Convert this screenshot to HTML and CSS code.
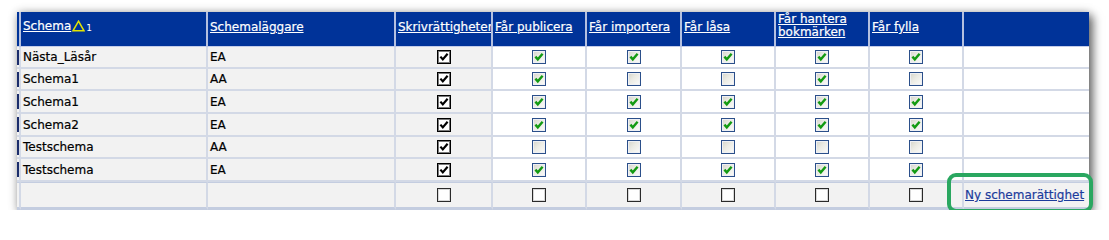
FILE: index.html
```html
<!DOCTYPE html>
<html lang="sv">
<head>
<meta charset="utf-8">
<title>Schemarättigheter</title>
<link rel="stylesheet" href="styles.css">
</head>
<body>
<div class="page">
  <div class="panel">
    <table class="grid">
      <colgroup>
        <col class="c-ind"><col class="c-name"><col class="c-owner"><col class="c-write">
        <col class="c-perm"><col class="c-perm2"><col class="c-perm"><col class="c-perm"><col class="c-perm"><col class="c-last">
      </colgroup>
      <thead>
        <tr class="head">
          <th class="ind"></th>
          <th><a class="hl" href="#">Schema</a><span class="sort"><svg class="tri" width="13" height="12" viewBox="0 0 13 12"><polygon points="6.5,1.2 12,10.8 1,10.8" fill="none" stroke="#e4e400" stroke-width="1.5"/></svg><span class="sortnum">1</span></span></th>
          <th><a class="hl" href="#">Schemaläggare</a></th>
          <th><a class="hl" href="#">Skrivrättigheter</a></th>
          <th><a class="hl" href="#">Får publicera</a></th>
          <th><a class="hl" href="#">Får importera</a></th>
          <th><a class="hl" href="#">Får låsa</a></th>
          <th class="two"><a class="hl" href="#">Får hantera bokmärken</a></th>
          <th><a class="hl" href="#">Får fylla</a></th>
          <th class="lastcol"></th>
        </tr>
      </thead>
      <tbody>
        <tr class="row r22">
          <td class="ind"><span class="mark"></span></td><td class="txt">Nästa_Läsår</td><td class="txt">EA</td>
          <td class="cbc grey"><span class="cb blk"><svg class="ck" viewBox="0 0 12 12"><path d="M2.4 5.6 L4.8 8.4 L9.6 2.8" fill="none" stroke="#000" stroke-width="2.2"/></svg></span></td>
          <td class="cbc"><span class="cb on"><svg class="ck" viewBox="0 0 12 12"><path d="M2.4 5.6 L4.8 8.4 L9.6 2.8" fill="none" stroke="#129a12" stroke-width="2.4"/></svg></span></td>
          <td class="cbc"><span class="cb on"><svg class="ck" viewBox="0 0 12 12"><path d="M2.4 5.6 L4.8 8.4 L9.6 2.8" fill="none" stroke="#129a12" stroke-width="2.4"/></svg></span></td>
          <td class="cbc"><span class="cb on"><svg class="ck" viewBox="0 0 12 12"><path d="M2.4 5.6 L4.8 8.4 L9.6 2.8" fill="none" stroke="#129a12" stroke-width="2.4"/></svg></span></td>
          <td class="cbc"><span class="cb on"><svg class="ck" viewBox="0 0 12 12"><path d="M2.4 5.6 L4.8 8.4 L9.6 2.8" fill="none" stroke="#129a12" stroke-width="2.4"/></svg></span></td>
          <td class="cbc"><span class="cb on"><svg class="ck" viewBox="0 0 12 12"><path d="M2.4 5.6 L4.8 8.4 L9.6 2.8" fill="none" stroke="#129a12" stroke-width="2.4"/></svg></span></td>
          <td class="lastcol"></td>
        </tr>
        <tr class="row r22">
          <td class="ind"><span class="mark"></span></td><td class="txt">Schema1</td><td class="txt">AA</td>
          <td class="cbc grey"><span class="cb blk"><svg class="ck" viewBox="0 0 12 12"><path d="M2.4 5.6 L4.8 8.4 L9.6 2.8" fill="none" stroke="#000" stroke-width="2.2"/></svg></span></td>
          <td class="cbc"><span class="cb on"><svg class="ck" viewBox="0 0 12 12"><path d="M2.4 5.6 L4.8 8.4 L9.6 2.8" fill="none" stroke="#129a12" stroke-width="2.4"/></svg></span></td>
          <td class="cbc"><span class="cb off"></span></td>
          <td class="cbc"><span class="cb off"></span></td>
          <td class="cbc"><span class="cb on"><svg class="ck" viewBox="0 0 12 12"><path d="M2.4 5.6 L4.8 8.4 L9.6 2.8" fill="none" stroke="#129a12" stroke-width="2.4"/></svg></span></td>
          <td class="cbc"><span class="cb off"></span></td>
          <td class="lastcol"></td>
        </tr>
        <tr class="row r23">
          <td class="ind"><span class="mark"></span></td><td class="txt">Schema1</td><td class="txt">EA</td>
          <td class="cbc grey"><span class="cb blk"><svg class="ck" viewBox="0 0 12 12"><path d="M2.4 5.6 L4.8 8.4 L9.6 2.8" fill="none" stroke="#000" stroke-width="2.2"/></svg></span></td>
          <td class="cbc"><span class="cb on"><svg class="ck" viewBox="0 0 12 12"><path d="M2.4 5.6 L4.8 8.4 L9.6 2.8" fill="none" stroke="#129a12" stroke-width="2.4"/></svg></span></td>
          <td class="cbc"><span class="cb on"><svg class="ck" viewBox="0 0 12 12"><path d="M2.4 5.6 L4.8 8.4 L9.6 2.8" fill="none" stroke="#129a12" stroke-width="2.4"/></svg></span></td>
          <td class="cbc"><span class="cb on"><svg class="ck" viewBox="0 0 12 12"><path d="M2.4 5.6 L4.8 8.4 L9.6 2.8" fill="none" stroke="#129a12" stroke-width="2.4"/></svg></span></td>
          <td class="cbc"><span class="cb on"><svg class="ck" viewBox="0 0 12 12"><path d="M2.4 5.6 L4.8 8.4 L9.6 2.8" fill="none" stroke="#129a12" stroke-width="2.4"/></svg></span></td>
          <td class="cbc"><span class="cb on"><svg class="ck" viewBox="0 0 12 12"><path d="M2.4 5.6 L4.8 8.4 L9.6 2.8" fill="none" stroke="#129a12" stroke-width="2.4"/></svg></span></td>
          <td class="lastcol"></td>
        </tr>
        <tr class="row r23">
          <td class="ind"><span class="mark"></span></td><td class="txt">Schema2</td><td class="txt">EA</td>
          <td class="cbc grey"><span class="cb blk"><svg class="ck" viewBox="0 0 12 12"><path d="M2.4 5.6 L4.8 8.4 L9.6 2.8" fill="none" stroke="#000" stroke-width="2.2"/></svg></span></td>
          <td class="cbc"><span class="cb on"><svg class="ck" viewBox="0 0 12 12"><path d="M2.4 5.6 L4.8 8.4 L9.6 2.8" fill="none" stroke="#129a12" stroke-width="2.4"/></svg></span></td>
          <td class="cbc"><span class="cb on"><svg class="ck" viewBox="0 0 12 12"><path d="M2.4 5.6 L4.8 8.4 L9.6 2.8" fill="none" stroke="#129a12" stroke-width="2.4"/></svg></span></td>
          <td class="cbc"><span class="cb on"><svg class="ck" viewBox="0 0 12 12"><path d="M2.4 5.6 L4.8 8.4 L9.6 2.8" fill="none" stroke="#129a12" stroke-width="2.4"/></svg></span></td>
          <td class="cbc"><span class="cb on"><svg class="ck" viewBox="0 0 12 12"><path d="M2.4 5.6 L4.8 8.4 L9.6 2.8" fill="none" stroke="#129a12" stroke-width="2.4"/></svg></span></td>
          <td class="cbc"><span class="cb on"><svg class="ck" viewBox="0 0 12 12"><path d="M2.4 5.6 L4.8 8.4 L9.6 2.8" fill="none" stroke="#129a12" stroke-width="2.4"/></svg></span></td>
          <td class="lastcol"></td>
        </tr>
        <tr class="row r22">
          <td class="ind"><span class="mark"></span></td><td class="txt">Testschema</td><td class="txt">AA</td>
          <td class="cbc grey"><span class="cb blk"><svg class="ck" viewBox="0 0 12 12"><path d="M2.4 5.6 L4.8 8.4 L9.6 2.8" fill="none" stroke="#000" stroke-width="2.2"/></svg></span></td>
          <td class="cbc"><span class="cb off"></span></td>
          <td class="cbc"><span class="cb off"></span></td>
          <td class="cbc"><span class="cb off"></span></td>
          <td class="cbc"><span class="cb off"></span></td>
          <td class="cbc"><span class="cb off"></span></td>
          <td class="lastcol"></td>
        </tr>
        <tr class="row r23">
          <td class="ind"><span class="mark"></span></td><td class="txt">Testschema</td><td class="txt">EA</td>
          <td class="cbc grey"><span class="cb blk"><svg class="ck" viewBox="0 0 12 12"><path d="M2.4 5.6 L4.8 8.4 L9.6 2.8" fill="none" stroke="#000" stroke-width="2.2"/></svg></span></td>
          <td class="cbc"><span class="cb on"><svg class="ck" viewBox="0 0 12 12"><path d="M2.4 5.6 L4.8 8.4 L9.6 2.8" fill="none" stroke="#129a12" stroke-width="2.4"/></svg></span></td>
          <td class="cbc"><span class="cb on"><svg class="ck" viewBox="0 0 12 12"><path d="M2.4 5.6 L4.8 8.4 L9.6 2.8" fill="none" stroke="#129a12" stroke-width="2.4"/></svg></span></td>
          <td class="cbc"><span class="cb on"><svg class="ck" viewBox="0 0 12 12"><path d="M2.4 5.6 L4.8 8.4 L9.6 2.8" fill="none" stroke="#129a12" stroke-width="2.4"/></svg></span></td>
          <td class="cbc"><span class="cb on"><svg class="ck" viewBox="0 0 12 12"><path d="M2.4 5.6 L4.8 8.4 L9.6 2.8" fill="none" stroke="#129a12" stroke-width="2.4"/></svg></span></td>
          <td class="cbc"><span class="cb on"><svg class="ck" viewBox="0 0 12 12"><path d="M2.4 5.6 L4.8 8.4 L9.6 2.8" fill="none" stroke="#129a12" stroke-width="2.4"/></svg></span></td>
          <td class="lastcol"></td>
        </tr>
        <tr class="newrow">
          <td class="ind"></td><td></td><td></td>
          <td class="cbc"><span class="cb empty"></span></td>
          <td class="cbc"><span class="cb empty"></span></td>
          <td class="cbc"><span class="cb empty"></span></td>
          <td class="cbc"><span class="cb empty"></span></td>
          <td class="cbc"><span class="cb empty"></span></td>
          <td class="cbc"><span class="cb empty"></span></td>
          <td class="lastcol linkcell"><a class="newlink" href="#">Ny schemarättighet</a></td>
        </tr>
      </tbody>
    </table>
    <div class="highlight"></div>
  </div>
</div>
</body>
</html>
```

FILE: styles.css
```css
html, body {
  margin: 0;
  padding: 0;
  background: #ffffff;
}

body {
  font-family: "DejaVu Sans", Verdana, sans-serif;
  font-size: 12px;
  color: #000;
}

.page {
  padding: 12px 0 0 17px;
}

.panel {
  position: relative;
  width: 1072px;
  box-shadow: 4px 4px 9px rgba(0, 0, 0, 0.55), 0 0 9px rgba(0, 0, 0, 0.22);
}

.grid {
  width: 1072px;
  table-layout: fixed;
  border-collapse: separate;
  border-spacing: 0;
}

.c-ind { width: 4px; }
.c-name { width: 187px; }
.c-owner { width: 188px; }
.c-write { width: 97px; }
.c-perm { width: 94px; }
.c-perm2 { width: 95px; }
.c-last { width: 125px; }

.grid th,
.grid td {
  padding: 0;
  overflow: hidden;
  white-space: nowrap;
}

.txt,
.hl,
.newlink {
  -webkit-text-stroke: 0.2px currentColor;
}

/* header */
.head th {
  box-sizing: border-box;
  height: 35px;
  background: #003399;
  color: #fff;
  font-weight: normal;
  text-align: left;
  vertical-align: middle;
  line-height: 14px;
  padding: 0 1px 4px 2px;
  border-right: 2px solid #b4c0e0;
  border-bottom: 1px solid #c4cdea;
}

.head th.ind {
  padding: 0;
}

.head th.lastcol {
  border-right: none;
}

.head th.two {
  white-space: normal;
  padding-bottom: 7px;
  line-height: 13px;
}

.hl {
  color: #fff;
  text-decoration: underline;
}

.sort {
  display: inline-block;
  margin-left: 1px;
  vertical-align: -1px;
}

.tri {
  display: inline-block;
  vertical-align: -1px;
}

.sortnum {
  font-size: 9px;
  color: #fff;
  margin-left: 1px;
}

/* body rows */
.row td {
  box-sizing: border-box;
  background: #fff;
}

.r22 td { height: 22px; }
.r23 td { height: 23px; }

.row td,
.newrow td {
  border-right: 2px solid #d3d9e6;
  border-bottom: 2px solid #d3d9e6;
  vertical-align: middle;
}

.row td.lastcol,
.newrow td.lastcol {
  border-right: none;
}

.row td.ind,
.row td.txt,
.row td.grey {
  background: #f2f2f2;
}

.txt {
  padding-left: 2px !important;
}

.mark {
  display: block;
  width: 2px;
  height: 15px;
  background: #1c2e6c;
}

.newrow td {
  box-sizing: border-box;
  height: 28px;
  background: #f2f2f2;
  border-top: 1px solid #c4cde0;
  border-bottom: 3px solid #c4cde0;
}

.cbc {
  text-align: center;
  line-height: 0;
}

.cb {
  display: inline-block;
  width: 12px;
  height: 12px;
  border: 1px solid #2b4f8a;
  vertical-align: middle;
}

.cb.on,
.cb.off {
  background: linear-gradient(135deg, #d4d4ca 0%, #ebebe4 45%, #fbfbfa 100%);
  box-shadow: inset 0 0 0 1px #eef0f4;
}

.cb.blk {
  border-color: #000;
  background: #fff;
  box-shadow: inset 0 0 0 1px #7a7a7a;
}

.cb.empty {
  border-color: #2a2a2a;
  background: #fff;
  box-shadow: inset 0 0 0 1px #d8d8d8;
}

.ck {
  display: block;
  width: 12px;
  height: 12px;
}

.linkcell {
  padding-left: 1px !important;
}

.newlink {
  color: #1d3c9c;
  text-decoration: underline;
}

.highlight {
  position: absolute;
  left: 930px;
  top: 161px;
  width: 146px;
  height: 40px;
  box-sizing: border-box;
  border: 4px solid #2aa760;
  border-radius: 9px;
  pointer-events: none;
}
```
